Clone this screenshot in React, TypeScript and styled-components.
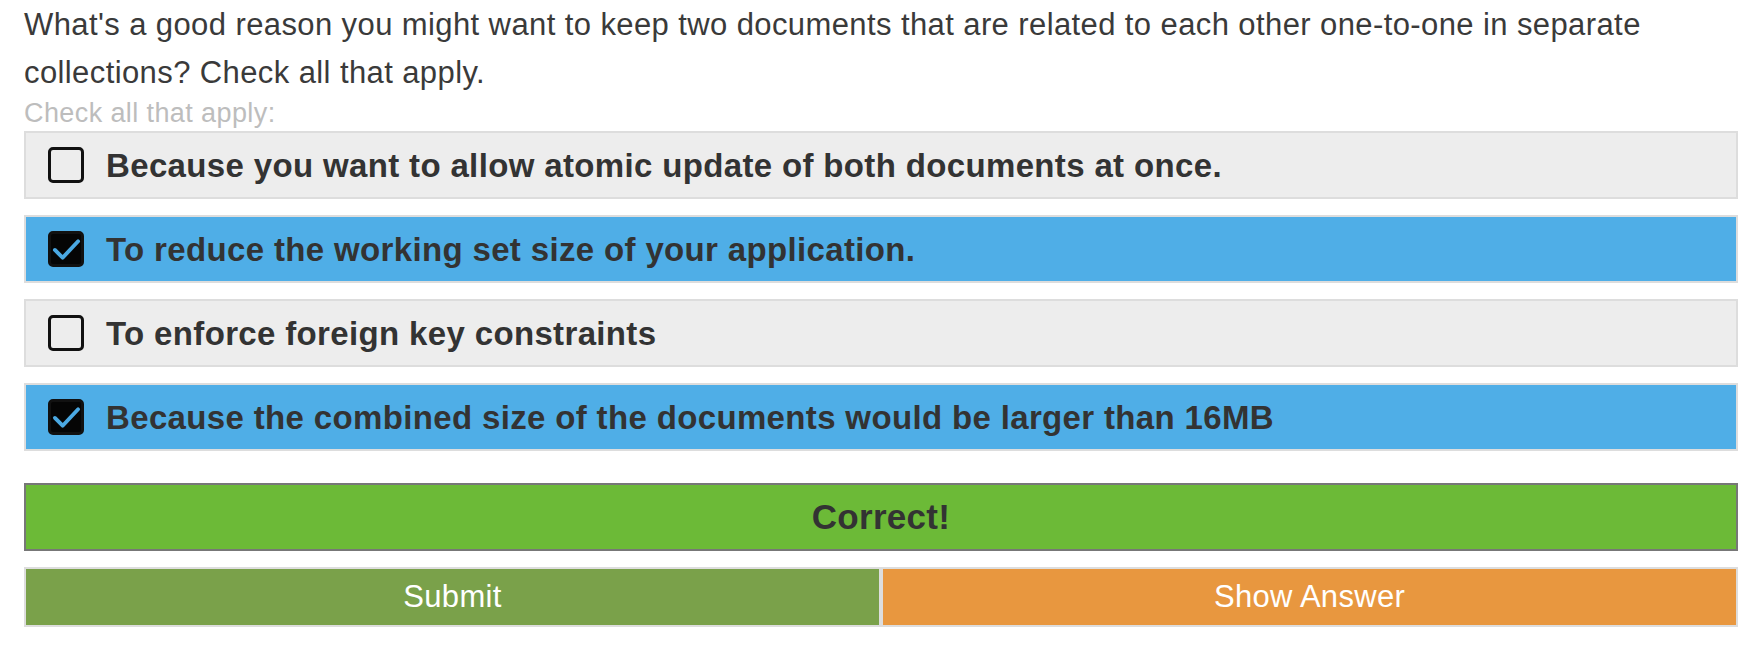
import React, { useState } from "react";
import styled, { createGlobalStyle } from "styled-components";

const GlobalStyle = createGlobalStyle`
  html, body {
    margin: 0;
    padding: 0;
    background: #ffffff;
  }
  body {
    font-family: "Liberation Sans", Arial, Helvetica, sans-serif;
    color: #333333;
  }
  * { box-sizing: border-box; }
`;

const Page = styled.div`
  width: 1763px;
  padding: 1px 25px 0 24px;
  display: flex;
  flex-direction: column;
`;

const Question = styled.p`
  margin: 0;
  font-size: 31px;
  line-height: 48px;
  letter-spacing: 0.4px;
  font-weight: 400;
  color: #3a3a3a;
`;

const Hint = styled.div`
  font-size: 27px;
  line-height: 32px;
  letter-spacing: 0.4px;
  color: #bdbdbd;
  margin-bottom: 2px;
`;

const Options = styled.div`
  display: flex;
  flex-direction: column;
  gap: 16px;
`;

const Option = styled.label<{ $checked: boolean }>`
  display: flex;
  align-items: center;
  gap: 22px;
  height: 68px;
  padding: 0 22px;
  border: 2px solid #dddddd;
  background: ${(p) => (p.$checked ? "#4faee7" : "#ededed")};
  cursor: pointer;
`;

const HiddenInput = styled.input`
  position: absolute;
  opacity: 0;
  width: 0;
  height: 0;
  margin: 0;
`;

const Box = styled.span<{ $checked: boolean }>`
  flex: none;
  width: 36px;
  height: 36px;
  border: 3.5px solid #111111;
  border-radius: 5px;
  background: ${(p) => (p.$checked ? "#050505" : "transparent")};
  display: flex;
  align-items: center;
  justify-content: center;
`;

const OptionText = styled.span`
  font-size: 33px;
  font-weight: 700;
  letter-spacing: 0.35px;
  color: #333333;
  line-height: 1;
`;

const Result = styled.div`
  margin-top: 32px;
  height: 68px;
  border: 2px solid #777777;
  background: #6cba37;
  display: flex;
  align-items: center;
  justify-content: center;
  font-size: 35px;
  font-weight: 700;
  letter-spacing: 0.3px;
  color: #333333;
`;

const ButtonRow = styled.div`
  margin-top: 16px;
  display: flex;
`;

const ActionButton = styled.button<{ $bg: string }>`
  flex: 1 1 0;
  height: 60px;
  border: 2px solid #dddddd;
  background: ${(p) => p.$bg};
  color: #ffffff;
  font-family: "Liberation Sans", Arial, Helvetica, sans-serif;
  font-size: 31px;
  font-weight: 400;
  letter-spacing: 0.3px;
  padding: 0;
  display: flex;
  align-items: center;
  justify-content: center;
  cursor: pointer;
`;

const Check = () => (
  <svg width="29" height="29" viewBox="0 0 30 30" aria-hidden="true">
    <polyline
      points="3,15.5 11,23.5 27,6.5"
      fill="none"
      stroke="#4aa8e2"
      strokeWidth="4"
      strokeLinecap="round"
      strokeLinejoin="round"
    />
  </svg>
);

const initialOptions = [
  { text: "Because you want to allow atomic update of both documents at once.", checked: false },
  { text: "To reduce the working set size of your application.", checked: true },
  { text: "To enforce foreign key constraints", checked: false },
  { text: "Because the combined size of the documents would be larger than 16MB", checked: true },
];

export default function App() {
  const [options, setOptions] = useState(initialOptions);

  const toggle = (i: number) =>
    setOptions((prev) => prev.map((o, j) => (j === i ? { ...o, checked: !o.checked } : o)));

  return (
    <>
      <GlobalStyle />
      <Page>
        <Question>
          What's a good reason you might want to keep two documents that are related to each other
          one-to-one in separate collections? Check all that apply.
        </Question>
        <Hint>Check all that apply:</Hint>
        <Options>
          {options.map((o, i) => (
            <Option key={i} $checked={o.checked}>
              <HiddenInput type="checkbox" checked={o.checked} onChange={() => toggle(i)} />
              <Box $checked={o.checked}>{o.checked && <Check />}</Box>
              <OptionText>{o.text}</OptionText>
            </Option>
          ))}
        </Options>
        <Result>Correct!</Result>
        <ButtonRow>
          <ActionButton $bg="#7aa14a">Submit</ActionButton>
          <ActionButton $bg="#e8973f">Show Answer</ActionButton>
        </ButtonRow>
      </Page>
    </>
  );
}
